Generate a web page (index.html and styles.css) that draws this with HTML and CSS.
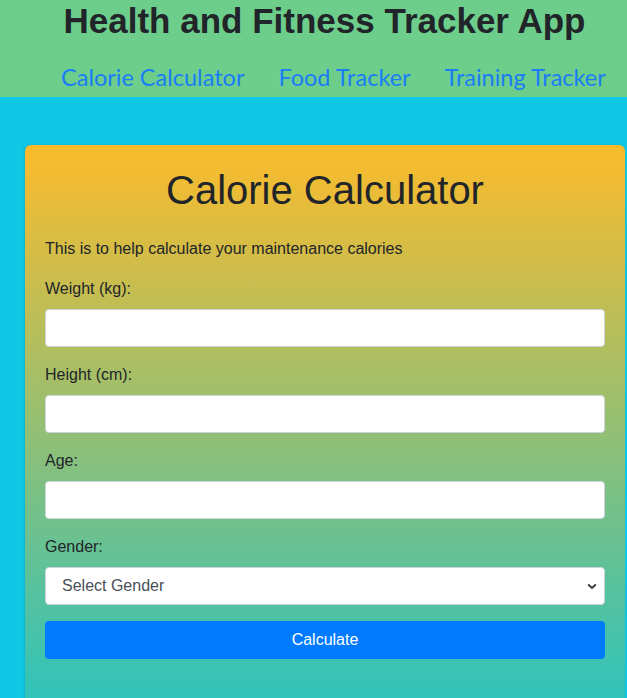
FILE: index.html
```html
<!DOCTYPE html>
<html>
<head>
<meta charset="utf-8">
<link rel="stylesheet" href="styles.css">
</head>
<body>
<header class="site-header">
  <h1 class="app-title">Health and Fitness Tracker App</h1>
  <nav class="nav">
    <a href="#" class="nav-link">Calorie Calculator</a>
    <a href="#" class="nav-link">Food Tracker</a>
    <a href="#" class="nav-link">Training Tracker</a>
  </nav>
</header>
<main class="main">
  <section class="card">
    <h2 class="card-title">Calorie Calculator</h2>
    <p class="intro">This is to help calculate your maintenance calories</p>
    <div class="form-group">
      <label class="label">Weight (kg):</label>
      <input class="input" type="text">
    </div>
    <div class="form-group">
      <label class="label">Height (cm):</label>
      <input class="input" type="text">
    </div>
    <div class="form-group">
      <label class="label">Age:</label>
      <input class="input" type="text">
    </div>
    <div class="form-group">
      <label class="label">Gender:</label>
      <div class="select">
        <span>Select Gender</span>
        <svg class="chev" width="10" height="7" viewBox="0 0 10 7"><path d="M1.2 1.5 L5 5 L8.8 1.5" fill="none" stroke="#3a3f45" stroke-width="2"/></svg>
      </div>
    </div>
    <button class="btn">Calculate</button>
  </section>
</main>
</body>
</html>
```

FILE: styles.css
```css
* { box-sizing: border-box; }
html, body { margin: 0; padding: 0; }
body {
  background: #10c8e6;
  font-family: "Liberation Sans", Arial, sans-serif;
  color: #212529;
  overflow: hidden;
  height: 698px;
}
.site-header {
  background: #6dce8c;
  height: 97px;
  display: flex;
  flex-direction: column;
}
.app-title {
  margin: 0;
  padding-left: 22px;
  text-align: center;
  font-size: 35px;
  font-weight: bold;
  line-height: 42px;
  color: #212529;
}
.nav {
  display: flex;
  gap: 34px;
  padding-left: 61px;
  margin-top: 21px;
}
.nav-link {
  font-family: "Lato", sans-serif;
  font-size: 23.5px;
  color: #1a7cf7;
  text-decoration: none;
  line-height: 28px;
}
.main {
  padding: 48px 2px 0 25px;
}
.card {
  width: 600px;
  border-radius: 6px;
  padding: 21px 20px 40px;
  background: linear-gradient(180deg, #fcbb2b 0%, #1ec4c6 100%);
  height: 600px;
  box-shadow: -1px 0 3px rgba(0,0,0,0.12);
}
.card-title {
  margin: 0 0 23px;
  text-align: center;
  font-size: 40px;
  font-weight: normal;
  line-height: 48px;
}
.intro {
  margin: 0 0 16px;
  font-size: 16px;
  line-height: 24px;
}
.form-group {
  margin-bottom: 16px;
}
.label {
  display: block;
  font-size: 16px;
  line-height: 24px;
  margin-bottom: 8px;
}
.input {
  display: block;
  width: 100%;
  height: 38px;
  border: 1px solid #ced4da;
  border-radius: 4px;
  background: #fff;
  font-size: 16px;
}
.select {
  height: 38px;
  border: 1px solid #ced4da;
  border-radius: 4px;
  background: #fff;
  display: flex;
  align-items: center;
  justify-content: space-between;
  padding: 0 7px 0 16px;
  font-size: 16px;
  color: #495057;
}
.btn {
  display: block;
  width: 100%;
  height: 38px;
  border: none;
  border-radius: 4px;
  background: #007bff;
  color: #fff;
  font-family: "Liberation Sans", Arial, sans-serif;
  font-size: 16px;
}
```
